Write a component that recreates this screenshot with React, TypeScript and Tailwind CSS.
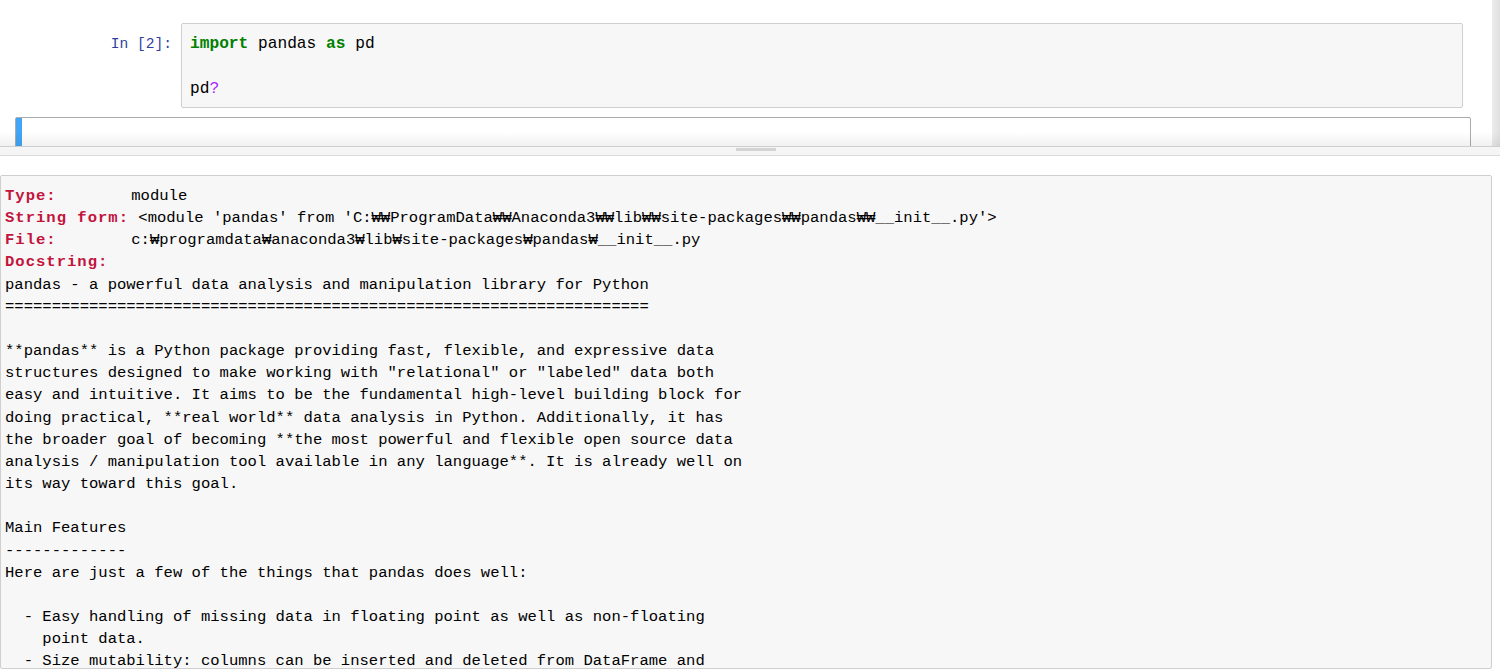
import React from "react";

const mono = "font-['Liberation_Mono','Noto_Sans_CJK_KR',monospace]";

const Label = ({ children }: { children: React.ReactNode }) => (
  <span className="font-bold tracking-[1px] text-[#c2143c]">{children}</span>
);

export default function App() {
  const body = `pandas - a powerful data analysis and manipulation library for Python
=====================================================================

**pandas** is a Python package providing fast, flexible, and expressive data
structures designed to make working with "relational" or "labeled" data both
easy and intuitive. It aims to be the fundamental high-level building block for
doing practical, **real world** data analysis in Python. Additionally, it has
the broader goal of becoming **the most powerful and flexible open source data
analysis / manipulation tool available in any language**. It is already well on
its way toward this goal.

Main Features
-------------
Here are just a few of the things that pandas does well:

  - Easy handling of missing data in floating point as well as non-floating
    point data.
  - Size mutability: columns can be inserted and deleted from DataFrame and`;

  return (
    <div className="w-[1500px] h-[669px] overflow-hidden bg-white flex flex-col text-black">
      {/* Notebook area */}
      <div className="relative h-[146px] flex shrink-0 overflow-hidden">
        <div className="flex-1 pl-[15px] pr-[21px] pt-[23px]">
          <div className="flex">
            <div
              className={`w-[166px] shrink-0 text-right pr-[9px] pt-[10px] text-[14.6px] leading-[22px] text-[#303f9f] ${mono}`}
            >
              In&nbsp;[2]:
            </div>
            <div
              className={`flex-1 mr-[8px] h-[85px] bg-[#f7f7f7] border border-[#cfcfcf] rounded-[2px] pl-[8px] pt-[9px] text-[16.2px] leading-[22.5px] ${mono}`}
            >
              <div>
                <span className="font-bold text-[#008000]">import</span> pandas{" "}
                <span className="font-bold text-[#008000]">as</span> pd
              </div>
              <div>&nbsp;</div>
              <div>
                pd<span className="text-[#aa22ff]">?</span>
              </div>
            </div>
          </div>
          <div className="mt-[9px] h-[40px] flex border border-[#ababab] rounded-[2px] bg-white">
            <div className="w-[6px] bg-[#42a5f5]" />
            <div className="flex-1" />
          </div>
        </div>
        <div className="w-[8px] shrink-0 bg-gradient-to-r from-[#ececec] to-[#e0e0e0]" />
        <div className="pointer-events-none absolute left-0 right-0 bottom-0 h-[14px] bg-gradient-to-b from-[rgba(0,0,0,0)] to-[rgba(0,0,0,0.06)]" />
      </div>

      {/* Splitter */}
      <div className="shrink-0 h-[10px] border-t border-b border-t-[#cfcfcf] border-b-[#dadada] bg-[#f5f5f5]">
        <div className="ml-[736px] mt-[1px] w-[40px] h-[3px] bg-[#d4d4d4]" />
      </div>

      {/* Pager */}
      <div className="flex-1 pt-[19px] min-h-0">
        <div
          className={`w-[1492px] h-full bg-[#f7f7f7] border border-[#cfcfcf] rounded-[2px] pt-[9px] pl-[4px] overflow-hidden text-[15.55px] leading-[22.15px] ${mono}`}
        >
          <pre className={`whitespace-pre m-0 ${mono}`}>
            <Label>Type:</Label>
            {"        module\n"}
            <Label>String form:</Label>
            {" <module 'pandas' from 'C:₩₩ProgramData₩₩Anaconda3₩₩lib₩₩site-packages₩₩pandas₩₩__init__.py'>\n"}
            <Label>File:</Label>
            {"        c:₩programdata₩anaconda3₩lib₩site-packages₩pandas₩__init__.py\n"}
            <Label>Docstring:</Label>
            {"\n"}
            {body}
          </pre>
        </div>
      </div>
    </div>
  );
}
